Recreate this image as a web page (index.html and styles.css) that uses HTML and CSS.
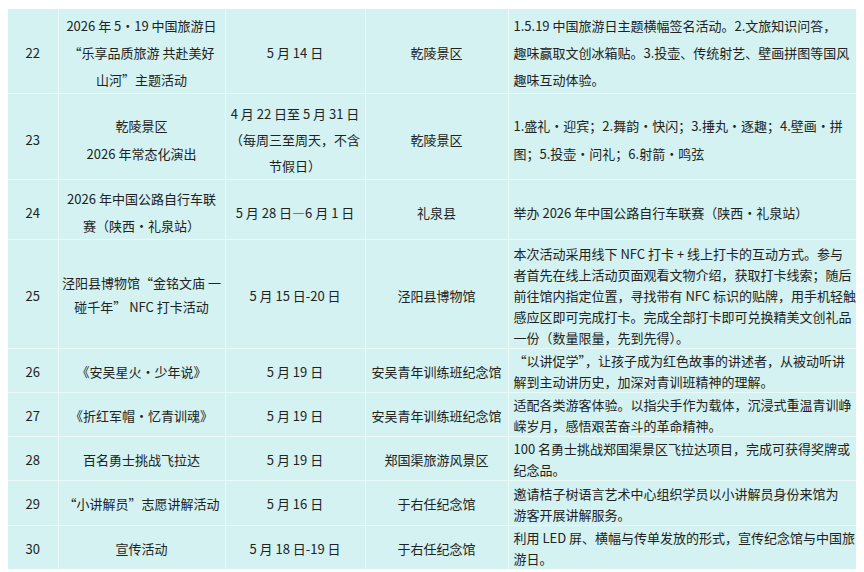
FILE: index.html
```html
<!DOCTYPE html>
<html lang="zh-CN">
<head>
<meta charset="utf-8">
<link rel="stylesheet" href="styles.css">
</head>
<body>
<table class="events">
  <colgroup>
    <col class="c-no"><col class="c-name"><col class="c-date"><col class="c-place"><col class="c-desc">
  </colgroup>
  <tbody>
    <tr class="r22">
      <td class="no">22</td>
      <td class="ctr">2026 年 5·19 中国旅游日<br>“乐享品质旅游 共赴美好<br>山河”主题活动</td>
      <td class="ctr">5 月 14 日</td>
      <td class="ctr">乾陵景区</td>
      <td class="desc">1.5.19 中国旅游日主题横幅签名活动。2.文旅知识问答，<br>趣味赢取文创冰箱贴。3.投壶、传统射艺、壁画拼图等国风<br>趣味互动体验。</td>
    </tr>
    <tr class="r23">
      <td class="no">23</td>
      <td class="ctr name23">乾陵景区<br>2026 年常态化演出</td>
      <td class="ctr">4 月 22 日至 5 月 31 日<br>（每周三至周天，不含<br>节假日）</td>
      <td class="ctr">乾陵景区</td>
      <td class="desc desc23">1.盛礼·迎宾；2.舞韵·快闪；3.捶丸·逐趣；4.壁画·拼<br>图；5.投壶·问礼；6.射箭·鸣弦</td>
    </tr>
    <tr class="r24">
      <td class="no">24</td>
      <td class="ctr">2026 年中国公路自行车联<br>赛（陕西·礼泉站）</td>
      <td class="ctr">5 月 28 日—6 月 1 日</td>
      <td class="ctr">礼泉县</td>
      <td class="desc">举办 2026 年中国公路自行车联赛（陕西·礼泉站）</td>
    </tr>
    <tr class="r25">
      <td class="no">25</td>
      <td class="ctr name25">泾阳县博物馆“金铭文庙 一<br>碰千年” NFC 打卡活动</td>
      <td class="ctr">5 月 15 日-20 日</td>
      <td class="ctr">泾阳县博物馆</td>
      <td class="desc">本次活动采用线下 NFC 打卡 + 线上打卡的互动方式。参与<br>者首先在线上活动页面观看文物介绍，获取打卡线索；随后<br>前往馆内指定位置，寻找带有 NFC 标识的贴牌，用手机轻触<br>感应区即可完成打卡。完成全部打卡即可兑换精美文创礼品<br>一份（数量限量，先到先得）。</td>
    </tr>
    <tr class="r26">
      <td class="no">26</td>
      <td class="ctr">《安吴星火·少年说》</td>
      <td class="ctr">5 月 19 日</td>
      <td class="ctr">安吴青年训练班纪念馆</td>
      <td class="desc">“以讲促学”，让孩子成为红色故事的讲述者，从被动听讲<br>解到主动讲历史，加深对青训班精神的理解。</td>
    </tr>
    <tr class="r27">
      <td class="no">27</td>
      <td class="ctr">《折红军帽·忆青训魂》</td>
      <td class="ctr">5 月 19 日</td>
      <td class="ctr">安吴青年训练班纪念馆</td>
      <td class="desc">适配各类游客体验。以指尖手作为载体，沉浸式重温青训峥<br>嵘岁月，感悟艰苦奋斗的革命精神。</td>
    </tr>
    <tr class="r28">
      <td class="no">28</td>
      <td class="ctr">百名勇士挑战飞拉达</td>
      <td class="ctr">5 月 19 日</td>
      <td class="ctr">郑国渠旅游风景区</td>
      <td class="desc">100 名勇士挑战郑国渠景区飞拉达项目，完成可获得奖牌或<br>纪念品。</td>
    </tr>
    <tr class="r29">
      <td class="no">29</td>
      <td class="ctr">“小讲解员”志愿讲解活动</td>
      <td class="ctr">5 月 16 日</td>
      <td class="ctr">于右任纪念馆</td>
      <td class="desc">邀请桔子树语言艺术中心组织学员以小讲解员身份来馆为<br>游客开展讲解服务。</td>
    </tr>
    <tr class="r30">
      <td class="no">30</td>
      <td class="ctr">宣传活动</td>
      <td class="ctr">5 月 18 日-19 日</td>
      <td class="ctr">于右任纪念馆</td>
      <td class="desc">利用 LED 屏、横幅与传单发放的形式，宣传纪念馆与中国旅<br>游日。</td>
    </tr>
  </tbody>
</table>
</body>
</html>
```

FILE: styles.css
```css
html, body {
  margin: 0;
  padding: 0;
  background: #ffffff;
}
body {
  padding: 9px 8px 0 8px;
  font-family: "Noto Sans CJK SC", "Noto Sans", sans-serif;
  font-size: 13px;
  color: #222222;
}
.events {
  width: 848px;
  table-layout: fixed;
  border-collapse: collapse;
  background: #d3f2f1;
}
.c-no { width: 50px; }
.c-name { width: 167px; }
.c-date { width: 140px; }
.c-place { width: 143px; }
.c-desc { width: 348px; }

.events td {
  border: 1px solid #eafaf9;
  padding: 0;
  vertical-align: middle;
  white-space: nowrap;
  line-height: 21px;
}
.events tr:first-child td { border-top: none; }
.events tr:last-child td { border-bottom: none; }
.events td:first-child { border-left: none; }
.events td:last-child { border-right: none; }

.ctr, .no { text-align: center; }
.events td.desc { text-align: left; padding-left: 5px; }

.r22 { height: 84px; }
.r23 { height: 85px; }
.r24 { height: 59px; }
.r25 { height: 109px; }
.r26 { height: 43px; }
.r27 { height: 44px; }
.r28 { height: 44px; }
.r29 { height: 45px; }
.r30 { height: 43px; }

.events .r22 td { line-height: 27px; padding-top: 3px; }
.events .r23 td { line-height: 26px; padding-top: 7px; }
.events .r23 td.name23, .events .r23 td.desc23 { line-height: 28px; }
.events .r24 td { line-height: 27px; padding-top: 5px; }
.events .r25 td { line-height: 21px; padding-top: 2px; }
.events .r25 td.name25 { line-height: 24px; }
.events .r26 td, .events .r27 td, .events .r28 td, .events .r29 td, .events .r30 td { padding-top: 1px; }
```
